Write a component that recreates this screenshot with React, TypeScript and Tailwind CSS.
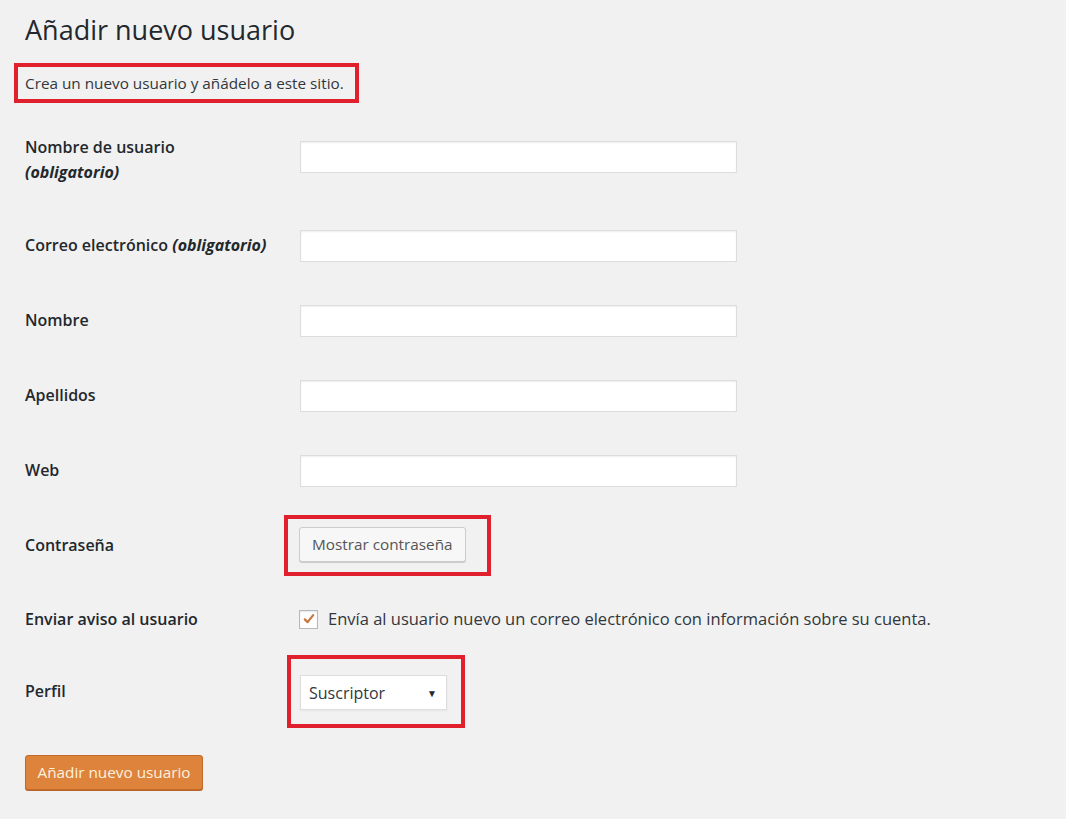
import React from 'react';

const labelCls = 'w-[275px] shrink-0 text-[16px] font-semibold text-[#23282d] leading-[25px]';
const inputCls =
  'w-[437px] h-[32px] bg-white border border-[#dddddd] shadow-[inset_0_1px_2px_rgba(0,0,0,0.07)] outline-none px-2 text-[15px]';

const Row: React.FC<{ label: React.ReactNode; children: React.ReactNode; h?: string }> = ({ label, children, h }) => (
  <div className={`flex items-center ${h ?? 'h-[75px]'}`}>
    <div className={labelCls}>{label}</div>
    <div className="flex items-center">{children}</div>
  </div>
);

export default function App() {
  return (
    <div
      className="min-h-[819px] w-full bg-[#f1f1f1] text-[#23282d] px-[25px]"
      style={{ fontFamily: '"Open Sans", "Noto Sans", sans-serif' }}
    >
      {/* encabezado */}
      <div className="h-[126px]">
        <h1 className="pt-[12px] text-[27px] font-normal leading-[36px] text-[#23282d]">Añadir nuevo usuario</h1>
        <div className="mt-[15px] -ml-[11px] w-[345px] h-[40px] border-4 border-[#e0202c] pl-[7px] flex items-center">
          <p className="text-[15.3px] text-[#32373c] whitespace-nowrap">Crea un nuevo usuario y añádelo a este sitio.</p>
        </div>
      </div>

      {/* formulario */}
      <div className="flex items-start h-[82px]">
        <div className={`${labelCls} pt-[9px]`}>
          Nombre de usuario
          <br />
          <em className="font-bold">(obligatorio)</em>
        </div>
        <input className={`${inputCls} mt-[15px]`} />
      </div>

      <Row
        label={
          <span className="whitespace-nowrap">
            Correo electrónico <em className="font-bold text-[16px]">(obligatorio)</em>
          </span>
        }
      >
        <input className={inputCls} />
      </Row>
      <Row label="Nombre">
        <input className={inputCls} />
      </Row>
      <Row label="Apellidos">
        <input className={inputCls} />
      </Row>
      <Row label="Web">
        <input className={inputCls} />
      </Row>
      <Row label="Contraseña">
        <div className="-ml-[16px] border-4 border-[#e0202c] pl-[11px] pr-[21px] pt-[8px] pb-[10px]">
          <button className="h-[35px] px-[12px] bg-[#f7f7f7] border border-[#cccccc] rounded-[3px] shadow-[0_1px_0_#cccccc] text-[15.3px] text-[#555555]">
            Mostrar contraseña
          </button>
        </div>
      </Row>
      <Row label="Enviar aviso al usuario" h="h-[72px]">
        <label className="flex items-center gap-[10px] -ml-px">
          <span className="w-[19px] h-[19px] bg-white border border-[#b4b9be] shadow-[inset_0_1px_2px_rgba(0,0,0,0.1)] flex items-center justify-center">
            <svg width="14" height="14" viewBox="0 0 20 20">
              <path d="M4 10.5 L8 14.5 L16 4.5" fill="none" stroke="#c9773f" strokeWidth="3.2" strokeLinecap="round" strokeLinejoin="round" />
            </svg>
          </span>
          <span className="text-[16.5px] text-[#32373c] whitespace-nowrap">
            Envía al usuario nuevo un correo electrónico con información sobre su cuenta.
          </span>
        </label>
      </Row>
      <Row label="Perfil" h="h-[73px]">
        <div className="-ml-[13px] border-4 border-[#e0202c] pl-[9px] pr-[14px] pt-[16px] pb-[14px]">
          <div className="w-[147px] h-[35px] bg-white border border-[#dddddd] shadow-[0_1px_2px_rgba(0,0,0,0.05)] flex items-center justify-between pl-[8px] pr-[9px]">
            <span className="text-[16px] text-[#32373c]">Suscriptor</span>
            <span className="text-[10px] text-[#23282d] leading-none">▼</span>
          </div>
        </div>
      </Row>

      <div className="pt-[27px]">
        <button className="h-[35px] w-[178px] bg-[#de833b] border border-[#c26a28] rounded-[3px] shadow-[0_1px_0_#b8642a] text-[15.3px] text-[#fdf1df]">
          Añadir nuevo usuario
        </button>
      </div>
    </div>
  );
}
